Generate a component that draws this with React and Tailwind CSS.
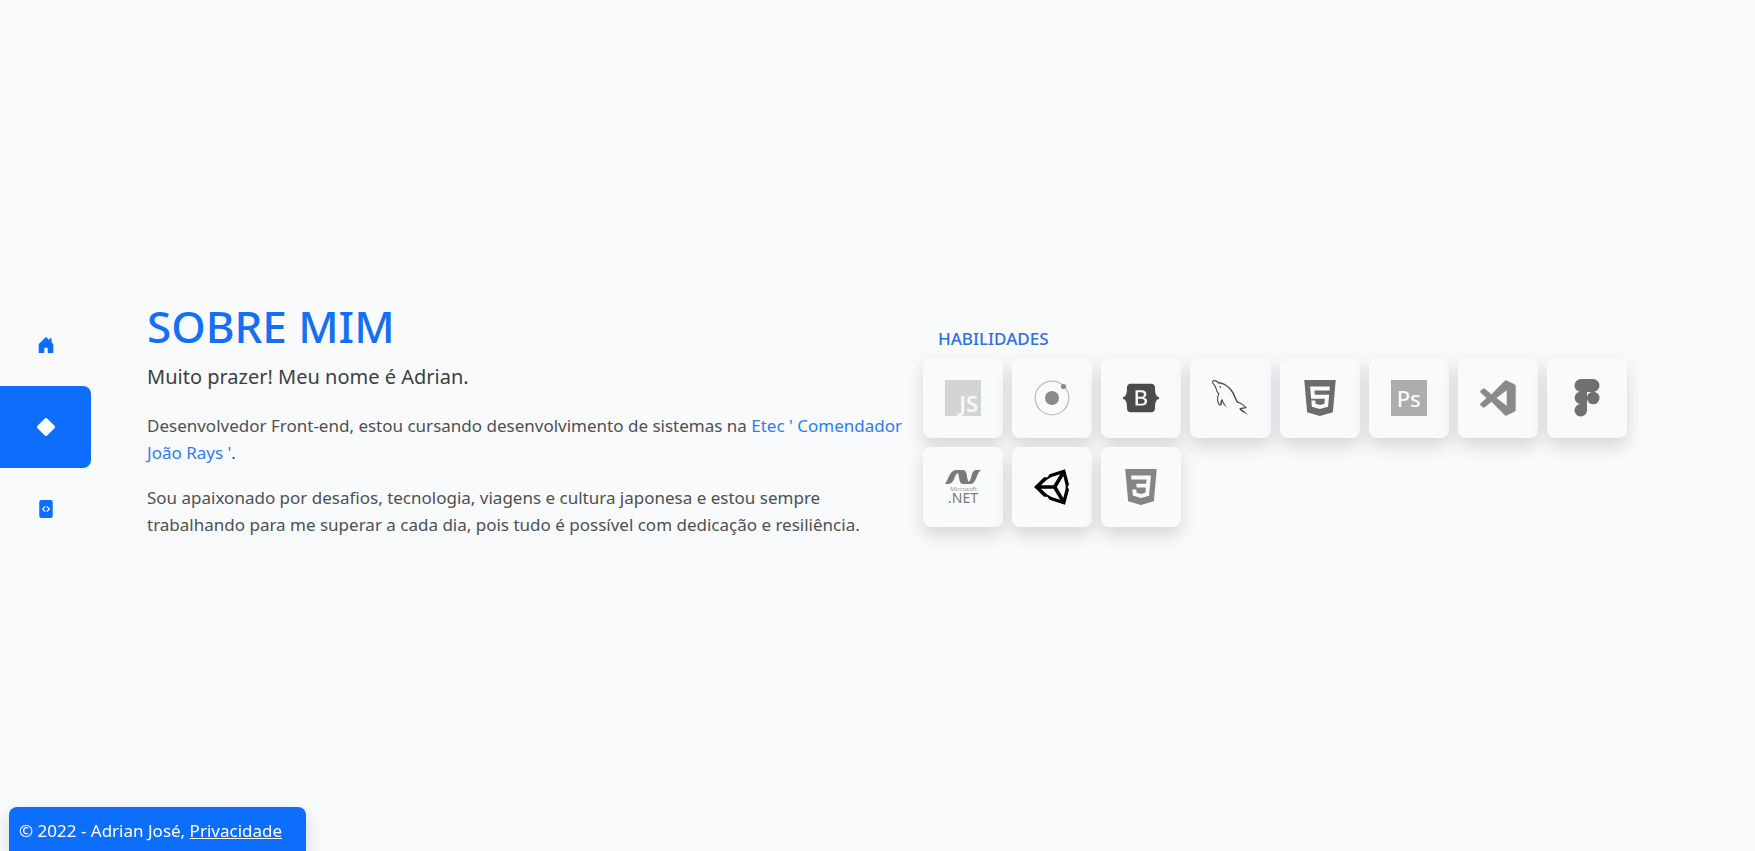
import { BsHouseDoorFill, BsDiamondFill, BsFileCodeFill } from "react-icons/bs";
import { SiBootstrap, SiHtml5, SiCss3 } from "react-icons/si";
import { GrMysql } from "react-icons/gr";

function JavaScript() {
  return (
    <span className="flex size-9 items-end justify-end bg-[#d4d4d4] pr-[3px] font-['Noto_Sans',sans-serif] text-[22px] leading-[26px] font-semibold text-[#f8faf9]">
      JS
    </span>
  );
}

function Ionic() {
  return (
    <svg viewBox="0 0 36 36" className="size-9">
      <circle cx="18" cy="18" r="16.8" fill="none" stroke="#bdbdbd" strokeWidth="1.3" />
      <circle cx="18" cy="18" r="7" fill="#8a8a8a" />
      <circle cx="29.5" cy="6.5" r="2.6" fill="#8a8a8a" />
    </svg>
  );
}

function Photoshop() {
  return (
    <span className="flex size-9 items-center justify-center bg-[#adadad] font-['Noto_Sans',sans-serif] text-[22px] leading-none font-medium text-[#f8faf9]">
      Ps
    </span>
  );
}

function VisualStudioCode() {
  return (
    <svg viewBox="0 0 36 36" className="size-9" fill="#8a8a8a" fillRule="evenodd">
      <path d="M0.500 12.500Q-0.300 11.300 0.700 10.400L3.200 8.600Q4 8.200 4.800 8.800L11.500 14.200L24.500 1Q25.500 0 26.700 0.500L34.500 4.200Q35.700 4.800 35.700 6V30Q35.700 31.200 34.500 31.800L26.700 35.500Q25.500 36 24.500 35L11.500 21.800L4.800 27.200Q4 27.800 3.200 27.400L0.700 25.600Q-0.300 24.700 0.500 23.500L6.500 18ZM26.700 10.200L16.500 18L26.700 25.800Z" />
    </svg>
  );
}

function Figma() {
  return (
    <svg viewBox="0 0 26 38" className="h-[38px] w-[26px]" fill="#707070">
      <rect x="0.5" y="0" width="25" height="13" rx="6.5" />
      <path d="M7 12.500H13V25.200H7A6.350 6.350 0 0 1 7 12.500Z" />
      <path d="M7 25H13V31.500A6.250 6.250 0 1 1 7 25Z" />
      <circle cx="19.2" cy="19" r="6.3" />
    </svg>
  );
}

function DotNet() {
  return (
    <svg viewBox="0 0 36 36" className="size-9 overflow-visible" fill="#7a7a7a">
      <path d="M0 15C4 10 4 2 11 1H18C23 1 21 10 24 13C27 10 26 1 31 1H36C31 4 32 15 25 15H18C13 15 15 6 12.500 4C9 6 10 15 3 15Z" />
      <text x="18.5" y="21.500" textAnchor="middle" fontSize="6" fill="#9a9a9a" fontFamily="Noto Sans, sans-serif">Microsoft</text>
      <text x="18" y="34" textAnchor="middle" fontSize="14" fontFamily="Noto Sans, sans-serif">.NET</text>
    </svg>
  );
}

function Unity() {
  return (
    <svg viewBox="0 0 36 36" className="size-9" fill="#000" fillRule="evenodd">
      <path d="M0 18L10 8.200H13.500L15.500 5.200L31 0.300L35 15.500L33.500 18L35 20.500L31 35.700L15.500 30.800L13.500 27.800H10ZM7 16.200H19.500L26.200 5.200L17.500 8L12.500 11ZM7 19.800L12.500 25L17.500 28L26.200 30.800L19.500 19.800ZM22.800 18L29.300 29L31.600 20V16L29.300 7Z" />
    </svg>
  );
}

const skills = [
  { name: "JavaScript", icon: <JavaScript /> },
  { name: "Ionic", icon: <Ionic /> },
  { name: "Bootstrap", icon: <SiBootstrap className="size-9 text-[#4b4b4b]" /> },
  { name: "MySQL", icon: <GrMysql className="size-9 text-[#4b4b4b]" /> },
  { name: "HTML5", icon: <SiHtml5 className="size-9 text-[#6c6c6c]" /> },
  { name: "Photoshop", icon: <Photoshop /> },
  { name: "Visual Studio Code", icon: <VisualStudioCode /> },
  { name: "Figma", icon: <Figma /> },
  { name: ".NET", icon: <DotNet /> },
  { name: "Unity", icon: <Unity /> },
  { name: "CSS3", icon: <SiCss3 className="size-9 text-[#858585]" /> },
];

const links = [
  { name: "Início", Icon: BsHouseDoorFill },
  { name: "Sobre mim", Icon: BsDiamondFill, active: true },
  { name: "Projetos", Icon: BsFileCodeFill },
];

export default function App() {
  return (
    <div className="flex min-h-screen items-center bg-[#f8fafc] font-['Noto_Sans',sans-serif] text-[17px] leading-[27px] text-[#4d5053]">
      <nav className="flex w-[91px] shrink-0 flex-col pt-[2px]">
        {links.map(({ name, Icon, active }) => (
          <a
            key={name}
            href="#"
            aria-label={name}
            aria-current={active ? "page" : undefined}
            className={
              active
                ? "flex h-[82px] items-center justify-center rounded-r-lg bg-[#0d6efd] text-white"
                : "flex h-[82px] items-center justify-center text-[#0d6efd]"
            }
          >
            <Icon className="size-[18px]" />
          </a>
        ))}
      </nav>

      <main className="grid flex-1 grid-cols-[776fr_704fr] items-center pr-32 pl-14">
        <section className="pr-3 pb-4">
          <h1 className="text-[44px] leading-[56px] font-medium text-[#146ff5]">SOBRE MIM</h1>
          <p className="mt-2 text-xl leading-[30px] text-[#3c3f42]">Muito prazer! Meu nome é Adrian.</p>
          <p className="mt-5">
            Desenvolvedor Front-end, estou cursando desenvolvimento de sistemas na{" "}
            <a href="#" className="text-[#2f7cf0]">Etec ' Comendador João Rays '</a>.
          </p>
          <p className="mt-[18px]">
            Sou apaixonado por desafios, tecnologia, viagens e cultura japonesa e estou sempre trabalhando para me
            superar a cada dia, pois tudo é possível com dedicação e resiliência.
          </p>
        </section>

        <section>
          <h2 className="mb-[6px] pl-[15px] font-medium text-[#2f6fe4]">HABILIDADES</h2>
          <ul className="grid grid-cols-8 gap-[9px]">
            {skills.map(({ name, icon }) => (
              <li
                key={name}
                title={name}
                className="flex h-20 items-center justify-center rounded-lg bg-[#f9fbfa] shadow-[0_8px_18px_rgba(0,0,0,0.15)]"
              >
                {icon}
              </li>
            ))}
          </ul>
        </section>
      </main>

      <footer className="fixed bottom-0 left-[9px] rounded-t-lg bg-[#0d6efd] pt-[10px] pr-6 pb-[7px] pl-[10px] text-white shadow-[0_8px_18px_rgba(0,0,0,0.15)]">
        © 2022 - Adrian José, <a href="#" className="underline">Privacidade</a>
      </footer>
    </div>
  );
}
